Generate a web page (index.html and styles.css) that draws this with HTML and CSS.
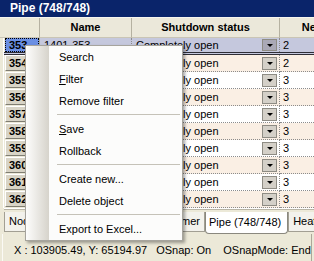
FILE: index.html
```html
<html>
  <head>
    <title>Pipe</title>
    <link rel="stylesheet" href="styles.css">
  </head>
  <body>
  <div class="window">
      <div class="title">Pipe (748/748)</div>

      <div class="grid">
          <div class="row head">
              <div class="rh"></div>
              <div class="name">Name</div>
              <div class="status">Shutdown status</div>
              <div class="net">Network</div>
          </div>
          <div class="row selected">
              <div class="rh"><span>353</span></div>
              <div class="name">1401-353</div>
              <div class="status">Completely open<span class="drop"></span></div>
              <div class="net">2</div>
          </div>
          <div class="row alt">
              <div class="rh"><span>354</span></div>
              <div class="name">1401-354</div>
              <div class="status">Completely open<span class="drop"></span></div>
              <div class="net">2</div>
          </div>
          <div class="row">
              <div class="rh"><span>355</span></div>
              <div class="name">1401-355</div>
              <div class="status">Completely open<span class="drop"></span></div>
              <div class="net">3</div>
          </div>
          <div class="row alt">
              <div class="rh"><span>356</span></div>
              <div class="name">1401-356</div>
              <div class="status">Completely open<span class="drop"></span></div>
              <div class="net">3</div>
          </div>
          <div class="row">
              <div class="rh"><span>357</span></div>
              <div class="name">1401-357</div>
              <div class="status">Completely open<span class="drop"></span></div>
              <div class="net">3</div>
          </div>
          <div class="row alt">
              <div class="rh"><span>358</span></div>
              <div class="name">1401-358</div>
              <div class="status">Completely open<span class="drop"></span></div>
              <div class="net">3</div>
          </div>
          <div class="row">
              <div class="rh"><span>359</span></div>
              <div class="name">1401-359</div>
              <div class="status">Completely open<span class="drop"></span></div>
              <div class="net">3</div>
          </div>
          <div class="row alt">
              <div class="rh"><span>360</span></div>
              <div class="name">1401-360</div>
              <div class="status">Completely open<span class="drop"></span></div>
              <div class="net">3</div>
          </div>
          <div class="row">
              <div class="rh"><span>361</span></div>
              <div class="name">1401-361</div>
              <div class="status">Completely open<span class="drop"></span></div>
              <div class="net">3</div>
          </div>
          <div class="row alt">
              <div class="rh"><span>362</span></div>
              <div class="name">1401-362</div>
              <div class="status">Completely open<span class="drop"></span></div>
              <div class="net">3</div>
          </div>
      </div>

      <div class="grid-end"></div>

      <div class="tabs">
          <div class="tab tab-node">Node (1520/1520)</div>
          <div class="tab tab-trafo">Transformer</div>
          <div class="tab active">Pipe (748/748)</div>
          <div class="tab">Heater (12/12)</div>
      </div>

      <div class="statusbar">
          <div class="panel">
              <span class="coords">X : 103905.49, Y: 65194.97</span>
              <span class="osnap">OSnap: On</span>
              <span>OSnapMode: End</span>
          </div>
      </div>

      <div class="menu">
          <div class="item">Search</div>
          <div class="item"><u>F</u>ilter</div>
          <div class="item">Remove filter</div>
          <div class="sep"></div>
          <div class="item"><u>S</u>ave</div>
          <div class="item">Rollback</div>
          <div class="sep"></div>
          <div class="item">Create new...</div>
          <div class="item">Delete object</div>
          <div class="sep"></div>
          <div class="item">Export to Excel...</div>
      </div>
  </div>
  </body>
</html>
```

FILE: styles.css
```css
body {
    margin: 0;
    background: #ece9d8;
    font-family: "Liberation Sans", Arial, sans-serif;
    font-size: 11px;
    color: #000;
}

.window {
    position: relative;
    width: 314px;
    height: 261px;
    overflow: hidden;
    background: #ece9d8;
}

.title {
    height: 17px;
    line-height: 17px;
    padding-left: 10px;
    background: #0a246a;
    color: #fff;
    font-weight: bold;
    font-size: 12px;
}

.grid {
    border-left: 1px solid #fff;
    margin-left: 3px;
}

.row {
    display: flex;
    height: 17px;
    line-height: 16px;
    white-space: nowrap;
    background: #fff;
}

.row.alt {
    background: #faefe4;
}

.row > div {
    box-sizing: border-box;
    overflow: hidden;
    flex: none;
    border-right: 1px dotted #8c8c8c;
    border-bottom: 1px dotted #8c8c8c;
}

.rh {
    width: 36px;
    background: #ece9d8;
}

.rh >span {
    display: block;
    box-sizing: border-box;
    height: 16px;
    margin-left: 1px;
    padding-left: 3px;
    line-height: 14px;
    font-weight: bold;
    background: #d8d4c6;
    border: 1px solid;
    border-color: #fff #7f7d72 #7f7d72 #fff;
}

.row > .rh {
    border-right: 1px solid #aca899;
    border-bottom: none;
}

.name {
    width: 92px;
    padding-left: 4px;
}

.status {
    width: 148px;
    padding-left: 4px;
    display: flex;
    align-items: center;
}

.net {
    width: 84px;
    padding-left: 3px;
}

.drop {
    margin-left: auto;
    margin-right: 2px;
    width: 15px;
    height: 13px;
    box-sizing: border-box;
    background: #d4d0c8;
    border: 1px solid #8e8c84;
    display: flex;
    align-items: center;
    justify-content: center;
}

.drop:after {
    content: "";
    border-left: 3px solid transparent;
    border-right: 3px solid transparent;
    border-top: 3px solid #000;
}

.row.head {
    height: 20px;
    line-height: 19px;
    background: #ebe8da;
    border-top: 1px solid #f6f5ee;
    margin-left: -4px;
}

.row.head > div {
    border-right: 1px solid #b5b1a1;
    border-bottom: 1px solid #c9c5b5;
    text-align: center;
    font-weight: bold;
    padding: 0;
}

.row.head > .rh {
    width: 40px;
}

.row.head > .status {
    display: block;
}

.row.head > .net {
    padding-left: 4px;
}

.row.selected {
    box-sizing: border-box;
    height: 17px;
    background: #c5c8dd;
    border-bottom: 3px double #2e2e36;
}

.row.selected > div {
    border-bottom: none;
    line-height: 14px;
}

.row.selected > .rh >span {
    height: 14px;
    line-height: 12px;
    background: #6b8fe3;
    border: 1px dotted #000;
}

.row.selected .drop {
    height: 12px;
    background: #aaa9b6;
}

.grid-end {
    height: 3px;
    border-top: 1px solid #fff;
    margin: 0 0 0 4px;
    box-shadow: inset 0 1px 0 #b9b5a6;
}

.tabs {
    display: flex;
    height: 22px;
    padding-left: 4px;
    white-space: nowrap;
}

.tab {
    box-sizing: border-box;
    flex: none;
    height: 20px;
    line-height: 18px;
    padding: 0 4px;
    background: #f3f2ec;
    border: 1px solid #a29f93;
    border-top: none;
}

.tab-node {
    width: 110px;
}

.tab-trafo {
    width: 91px;
    text-align: right;
}

.tab.active {
    height: 22px;
    line-height: 20px;
    background: #fff;
    border-color: #8a887e;
    border-radius: 0 0 4px 4px;
    padding: 0 6px 0 3px;
}

.statusbar {
    height: 28px;
}

.panel {
    margin: 0 2px;
    height: 28px;
    padding: 9px 0 0 11px;
    box-sizing: border-box;
    line-height: 14px;
    white-space: nowrap;
    border-left: 1px solid #fbfaf5;
    border-right: 1px solid #aca899;
}

.coords {
    margin-right: 6px;
}

.osnap {
    margin-right: 9px;
}

.menu {
    position: absolute;
    left: 25px;
    top: 45px;
    width: 158px;
    box-sizing: border-box;
    border: 1px solid #a6a49d;
    background: linear-gradient(to right, #fdfdfc 0, #d6d3cb 23px, #fcfcfb 23px);
    box-shadow: 2px 2px 3px rgba(0, 0, 0, 0.35);
}

.item {
    height: 22px;
    line-height: 22px;
    padding-left: 33px;
}

.sep {
    height: 6px;
    margin: 0 2px 0 31px;
    background: linear-gradient(#fcfcfb 2px, #c5c2b8 2px, #c5c2b8 3px, #fcfcfb 3px);
}
```
